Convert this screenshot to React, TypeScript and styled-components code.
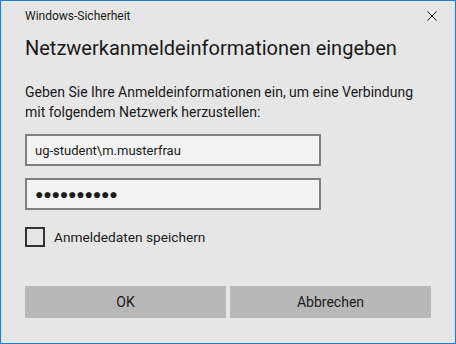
import React from 'react';
import styled, { createGlobalStyle } from 'styled-components';

const GlobalStyle = createGlobalStyle`
  html, body {
    margin: 0;
    padding: 0;
    background: #e6e6e6;
  }
  * {
    box-sizing: border-box;
  }
`;

const Window = styled.div`
  width: 456px;
  height: 344px;
  border: 1px solid #1a7fd6;
  background: #e6e6e6;
  font-family: Roboto, "Noto Sans", sans-serif;
  color: #1a1a1a;
  display: flex;
  flex-direction: column;
  padding: 0 24px;
`;

const TitleBar = styled.div`
  height: 32px;
  display: flex;
  align-items: center;
  justify-content: space-between;
  padding-bottom: 2px;
`;

const WindowTitle = styled.span`
  font-size: 12px;
  line-height: 16px;
  color: #1a1a1a;
`;

const CloseButton = styled.button`
  border: none;
  background: transparent;
  padding: 0;
  width: 10px;
  height: 10px;
  margin-right: -6px;
  display: flex;
  cursor: pointer;
`;

const Heading = styled.h1`
  margin: 1px 0 0;
  font-size: 20px;
  line-height: 28px;
  font-weight: 400;
  color: #1a1a1a;
`;

const Message = styled.p`
  margin: 20px 0 0;
  font-size: 14px;
  line-height: 20px;
  color: #1a1a1a;
`;

const Field = styled.input<{ $top: number; $dots?: boolean }>`
  margin-top: ${p => p.$top}px;
  width: 296px;
  height: 32px;
  border: 2px solid #808080;
  background: #f2f2f2;
  padding: 0 8px;
  font-family: inherit;
  font-size: ${p => (p.$dots ? '14px' : '13px')};
  letter-spacing: ${p => (p.$dots ? '-0.2px' : 'normal')};
  color: #1a1a1a;
  outline: none;
`;

const CheckRow = styled.label`
  margin-top: 17px;
  display: flex;
  align-items: center;
  gap: 9px;
  font-size: 13.7px;
  line-height: 20px;
  color: #1a1a1a;
`;

const Box = styled.span`
  width: 20px;
  height: 20px;
  border: 2px solid #333333;
  background: transparent;
`;

const Buttons = styled.div`
  margin-top: 39px;
  display: grid;
  grid-template-columns: 1fr 1fr;
  gap: 4px;
`;

const Button = styled.button`
  height: 32px;
  border: none;
  background: #b8b8b8;
  font-family: inherit;
  font-size: 14px;
  color: #1a1a1a;
  cursor: pointer;
`;

export default function App() {
  return (
    <>
      <GlobalStyle />
      <Window>
        <TitleBar>
          <WindowTitle>Windows-Sicherheit</WindowTitle>
          <CloseButton aria-label="Schließen">
            <svg width="10" height="10" viewBox="0 0 10 10">
              <path d="M0.5 0.5 L9.5 9.5 M9.5 0.5 L0.5 9.5" stroke="#1a1a1a" strokeWidth="1" />
            </svg>
          </CloseButton>
        </TitleBar>
        <Heading>Netzwerkanmeldeinformationen eingeben</Heading>
        <Message>
          Geben Sie Ihre Anmeldeinformationen ein, um eine Verbindung mit folgendem Netzwerk herzustellen:
        </Message>
        <Field $top={12} type="text" defaultValue={'ug-student\\m.musterfrau'} />
        <Field $top={12} $dots type="text" defaultValue="●●●●●●●●●●" />
        <CheckRow>
          <Box />
          Anmeldedaten speichern
        </CheckRow>
        <Buttons>
          <Button>OK</Button>
          <Button>Abbrechen</Button>
        </Buttons>
      </Window>
    </>
  );
}
